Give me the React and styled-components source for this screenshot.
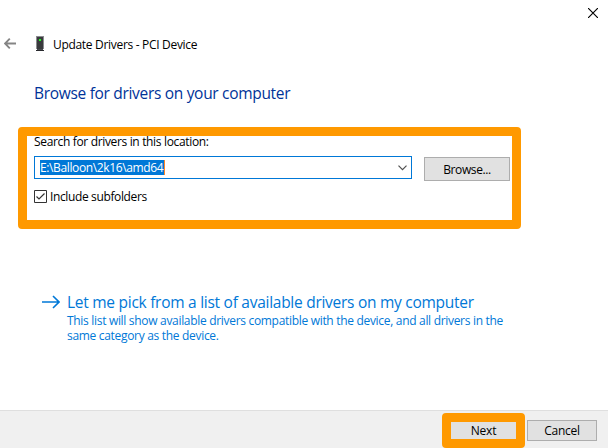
import React from "react";
import styled, { createGlobalStyle } from "styled-components";

const GlobalStyle = createGlobalStyle`
  * { box-sizing: border-box; }
  html, body { margin: 0; padding: 0; background: #fff; overflow: hidden; }
  svg { display: block; flex: none; }
`;

const Wizard = styled.main`
  width: 608px;
  height: 448px;
  display: flex;
  flex-direction: column;
  background: #fff;
  color: #000;
  font-family: "Open Sans", "Noto Sans", sans-serif;
  font-size: 12px;
`;

const Text = styled.span`
  display: block;
  white-space: nowrap;
  font-size: ${(p) => p.$size || 12}px;
  line-height: ${(p) => p.$line || 15}px;
  letter-spacing: ${(p) => p.$track || 0}px;
`;

const Description = styled(Text)`
  width: 445px;
  white-space: normal;
`;

const WindowBar = styled.div`
  height: 26px;
  display: flex;
  justify-content: flex-end;
  padding: 8px 10px 0 0;
`;

const TitleBar = styled.header`
  height: 36px;
  display: flex;
  align-items: center;
  padding-left: 4px;
`;

const DeviceIcon = styled.svg`
  margin: 0 9px 1px 20px;
`;

const Heading = styled.h1`
  margin: 0;
  height: 65px;
  padding: 20px 0 0 34px;
  font-weight: 400;
  color: #003399;
`;

const Highlight = styled.section`
  border: 9px solid #ff9900;
  border-radius: 4px;
`;

const SearchPanel = styled(Highlight)`
  width: 503px;
  height: 102px;
  margin-left: 18px;
  padding: 0 2px 0 7px;
  display: flex;
  flex-direction: column;
`;

const SearchLabel = styled.label`
  height: 20px;
  margin-top: -2px;
`;

const FieldRow = styled.div`
  display: flex;
  justify-content: space-between;
  align-items: flex-start;
  margin-top: 2px;
  height: 34px;
`;

const Combo = styled.div`
  width: 378px;
  height: 23px;
  border: 1px solid #0078d7;
  display: flex;
  align-items: center;
  justify-content: space-between;
  padding: 0 4px 0 5px;
`;

const Selection = styled.div`
  width: 125px;
  height: 15px;
  background: #0078d7;
  border-right: 1px solid #ff8728;
  color: #fff;
`;

const Button = styled.button`
  width: ${(p) => p.$w}px;
  height: ${(p) => p.$h}px;
  margin: ${(p) => p.$margin || "0"};
  padding: 0;
  border: ${(p) => (p.$plain ? "0" : "1px solid #adadad")};
  background: #e1e1e1;
  color: #000;
  font-family: inherit;
  display: flex;
  align-items: center;
  justify-content: center;
`;

const CheckRow = styled.label`
  display: flex;
  align-items: center;
  gap: 3px;
  height: 13px;
`;

const CommandLink = styled.a`
  display: flex;
  gap: 7px;
  margin: 62px 0 0 42px;
  color: #0078d7;
`;

const ArrowRight = styled.svg`
  margin-top: 4px;
`;

const Footer = styled.footer`
  height: 38px;
  margin-top: auto;
  border-top: 1px solid #dfdfdf;
  background: #f0f0f0;
  display: flex;
  justify-content: flex-end;
  gap: 2px;
  padding: 2px 11px 0 0;
`;

const NextHighlight = styled(Highlight)`
  width: 83px;
  height: 35px;
`;

export default function App() {
  return (
    <Wizard>
      <GlobalStyle />
      <WindowBar>
        <svg width="10" height="10" viewBox="0 0 10 10" stroke="#000" strokeWidth="1.15">
          <path d="M0 0L10 10M10 0L0 10" />
        </svg>
      </WindowBar>
      <TitleBar>
        <svg width="12" height="12" viewBox="0 0 12 12" fill="none" stroke="#858585" strokeWidth="1.9">
          <path d="M12 5.5H1M5.8 .7L1 5.5L5.8 10.3" />
        </svg>
        <DeviceIcon width="8" height="15" viewBox="0 0 8 15">
          <path d="M0 0H8V13H0Z" fill="#8b8c90" />
          <path d="M1 1H7V13H1Z" fill="#393a3d" />
          <path d="M0 14H8V15H0Z" fill="#292a2e" />
          <path d="M1 13H7V14H1Z" fill="#4a4a50" />
          <path d="M3 3H5V5H3Z" fill="#20ff20" />
        </DeviceIcon>
        <Text $track={-0.31}>Update Drivers - PCI Device</Text>
      </TitleBar>
      <Heading>
        <Text $size={15.5} $line={22} $track={-0.31}>Browse for drivers on your computer</Text>
      </Heading>
      <SearchPanel>
        <SearchLabel>
          <Text $track={-0.34}>Search for drivers in this location:</Text>
        </SearchLabel>
        <FieldRow>
          <Combo>
            <Selection>
              <Text $track={-0.37}>E:\Balloon\2k16\amd64</Text>
            </Selection>
            <svg width="9" height="6" viewBox="0 0 9 6" fill="none" stroke="#505050" strokeWidth="1.2">
              <path d="M.5 .7L4.5 4.7L8.5 .7" />
            </svg>
          </Combo>
          <Button $w={86} $h={24} $margin="1px 0 0">
            <Text $track={-0.4}>Browse...</Text>
          </Button>
        </FieldRow>
        <CheckRow>
          <svg width="13" height="13" viewBox="0 0 13 13" fill="#fff" stroke="#333">
            <path d="M.5 .5H12.5V12.5H.5Z" />
            <path d="M2.5 6.5L5 9L10.5 3.5" fill="none" strokeWidth="1.2" />
          </svg>
          <Text $track={-0.37}>Include subfolders</Text>
        </CheckRow>
      </SearchPanel>
      <CommandLink>
        <ArrowRight width="18" height="14" viewBox="0 0 18 14" fill="none" stroke="#0078d7" strokeWidth="1.6">
          <path d="M0 7H17M11 1L17 7L11 13" />
        </ArrowRight>
        <div>
          <Text $size={15.5} $line={22} $track={-0.27}>
            Let me pick from a list of available drivers on my computer
          </Text>
          <Description $track={-0.31}>
            This list will show available drivers compatible with the device, and all drivers in the
            same category as the device.
          </Description>
        </div>
      </CommandLink>
      <Footer>
        <NextHighlight>
          <Button $plain $w={65} $h={17}>
            <Text $track={-0.2}>Next</Text>
          </Button>
        </NextHighlight>
        <Button $w={70} $h={21} $margin="7px 0 0">
          <Text $track={-0.25}>Cancel</Text>
        </Button>
      </Footer>
    </Wizard>
  );
}
